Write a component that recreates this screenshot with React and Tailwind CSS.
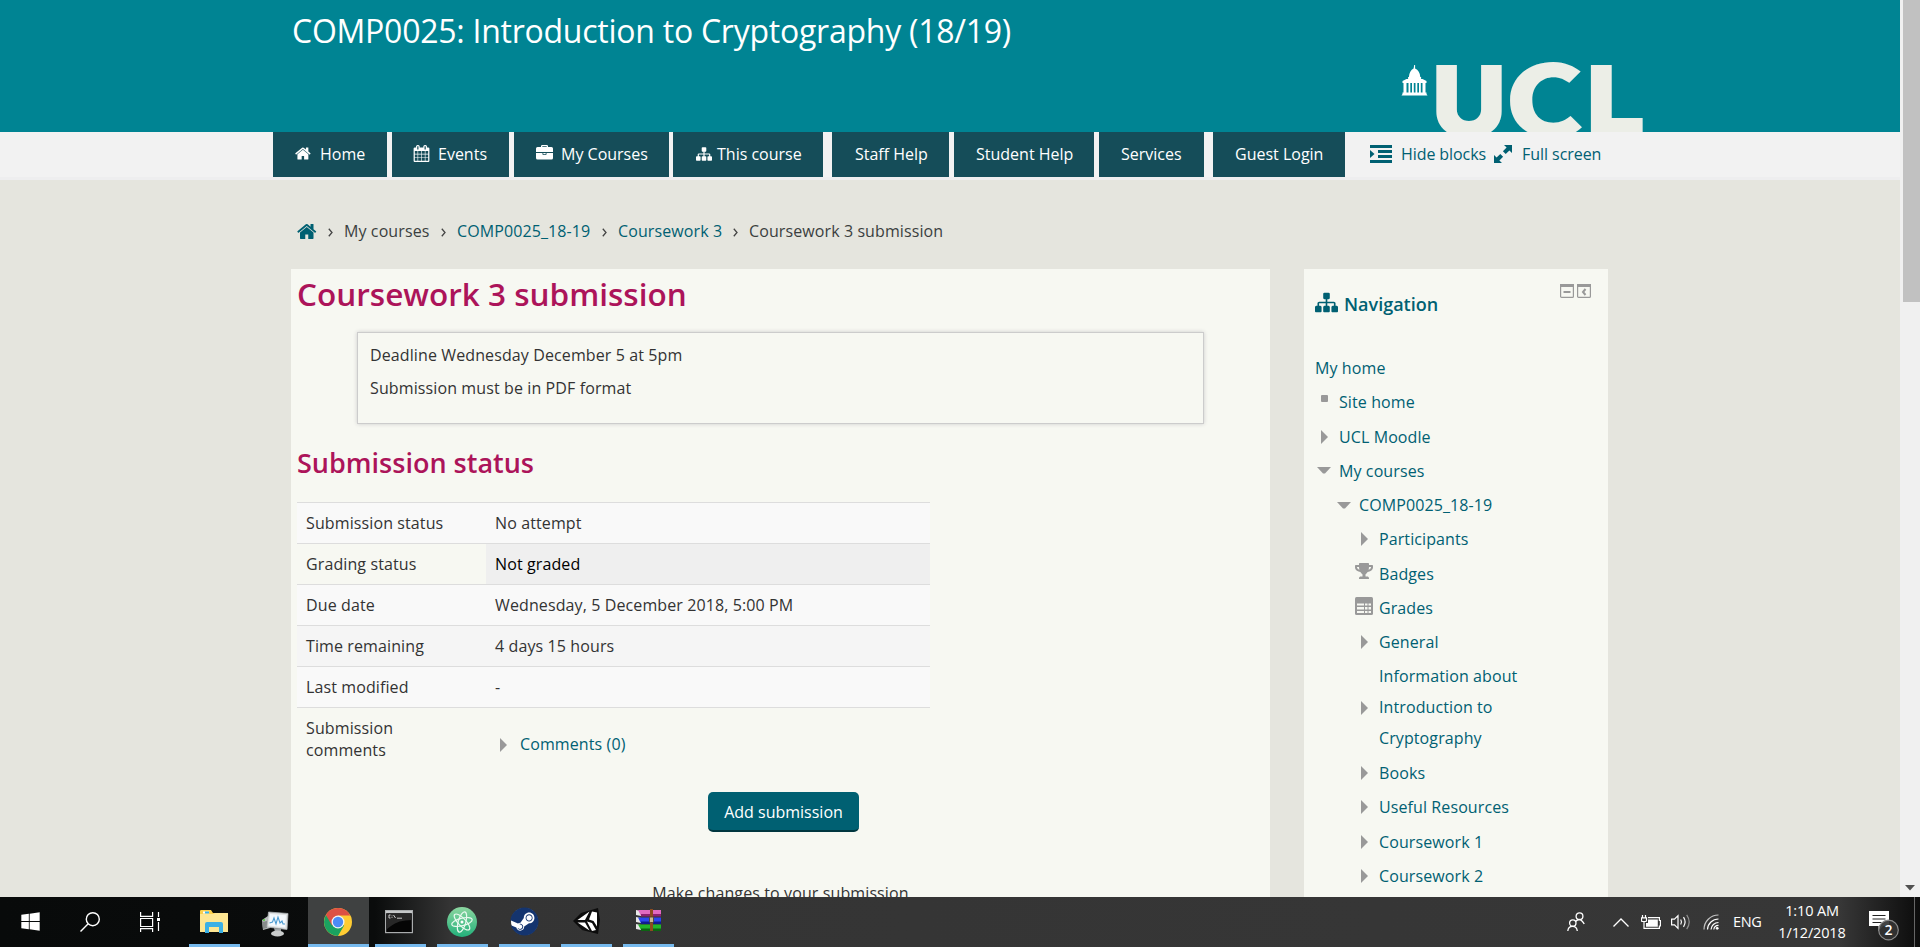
import React from "react";
import { FaSteam, FaTrophy, FaWindows } from "react-icons/fa";

const HOME =
  "M1408 992v480q0 26-19 45t-45 19h-384v-384h-256v384h-384q-26 0-45-19t-19-45v-480q0-1 .5-3t.5-3l575-474 575 474q1 2 1 6zm223-69l-62 74q-8 9-21 11h-3q-13 0-21-7l-692-577-692 577q-12 8-24 7-13-2-21-11l-62-74q-8-10-7-23.5t11-21.5l719-599q32-26 76-26t76 26l244 204v-195q0-14 9-23t23-9h192q14 0 23 9t9 23v408l219 182q10 8 11 21.5t-7 23.5z";
const CALENDAR =
  "M192 1664h288v-288h-288v288zm352 0h320v-288h-320v288zm-352-352h288v-320h-288v320zm352 0h320v-320h-320v320zm-352-384h288v-288h-288v288zm736 736h320v-288h-320v288zm-384-736h320v-288h-320v288zm768 736h288v-288h-288v288zm-384-352h320v-320h-320v320zm-352-864v-288q0-13-9.5-22.5t-22.5-9.5h-64q-13 0-22.5 9.5t-9.5 22.5v288q0 13 9.5 22.5t22.5 9.5h64q13 0 22.5-9.5t9.5-22.5zm736 864h288v-320h-288v320zm-384-384h320v-288h-320v288zm384 0h288v-288h-288v288zm32-480v-288q0-13-9.5-22.5t-22.5-9.5h-64q-13 0-22.5 9.5t-9.5 22.5v288q0 13 9.5 22.5t22.5 9.5h64q13 0 22.5-9.5t9.5-22.5zm384-64v1280q0 52-38 90t-90 38h-1408q-52 0-90-38t-38-90v-1280q0-52 38-90t90-38h128v-96q0-66 47-113t113-47h64q66 0 113 47t47 113v96h384v-96q0-66 47-113t113-47h64q66 0 113 47t47 113v96h128q52 0 90 38t38 90z";
const SITEMAP =
  "M1792 1248v320q0 40-28 68t-68 28h-320q-40 0-68-28t-28-68v-320q0-40 28-68t68-28h96v-192h-512v192h96q40 0 68 28t28 68v320q0 40-28 68t-68 28h-320q-40 0-68-28t-28-68v-320q0-40 28-68t68-28h96v-192h-512v192h96q40 0 68 28t28 68v320q0 40-28 68t-68 28h-320q-40 0-68-28t-28-68v-320q0-40 28-68t68-28h96v-192q0-52 38-90t90-38h512v-192h-96q-40 0-68-28t-28-68v-320q0-40 28-68t68-28h320q40 0 68 28t28 68v320q0 40-28 68t-68 28h-96v192h512q52 0 90 38t38 90v192h96q40 0 68 28t28 68z";

function Glyph({ d, className }) {
  return (
    <svg viewBox="0 0 1792 1792" fill="currentColor" className={className}>
      <path d={d} />
    </svg>
  );
}

function Briefcase() {
  return (
    <svg viewBox="0 0 17 15" className="h-[15px] w-[17px]" fill="currentColor">
      <path d="M5 2V1.2Q5 0 6.200 0h4.600Q12 0 12 1.200V2h3.500Q17 2 17 3.500V7H0V3.500Q0 2 1.500 2zM6.300 2h4.400V1.200H6.300z" />
      <path d="M0 8h6.500v1.200q0 .8.8.8h2.400q.8 0 .8-.8V8H17v5q0 1.500-1.500 1.500h-14Q0 14.500 0 13zM7.300 8h2.400v1.200H7.300z" />
    </svg>
  );
}

const tabs = [
  { label: "Home", box: "w-[114px] pl-[22px]", icon: <Glyph d={HOME} className="mr-[8px] size-[17px]" /> },
  { label: "Events", box: "ml-[5px] w-[117px] pl-[21px]", icon: <Glyph d={CALENDAR} className="mr-[8px] size-[17px]" /> },
  { label: "My Courses", box: "ml-[5px] w-[155px] pl-[22px]", icon: <span className="mr-[8px] pb-[2px]"><Briefcase /></span> },
  { label: "This course", box: "ml-[4px] w-[150px] pl-[23px]", icon: <Glyph d={SITEMAP} className="mr-[5px] size-[16px]" /> },
  { label: "Staff Help", box: "ml-[9px] w-[117px] pl-[23px]" },
  { label: "Student Help", box: "ml-[5px] w-[140px] pl-[22px]" },
  { label: "Services", box: "ml-[5px] w-[105px] pl-[22px]" },
  { label: "Guest Login", box: "ml-[9px] w-[132px] pl-[22px]" },
];

function UclLogo() {
  return (
    <svg viewBox="0 0 252 72" className="mr-[253px] h-[72px] w-[252px] shrink-0 overflow-hidden">
      <g fill="#fff">
        <path d="M19.200 5h.9v3.500q4.700 2 5.200 8.500h.8v2.500h-13V17h.8q.5-6.500 4.700-8.500z" />
        <path d="M7.500 21l4-2h16l4 2v2h-24zM8.500 22.500h3v10h-3zM13.500 22.500h1.800v10h-1.800zM17 22.500h1.800v10H17zM20.500 22.500h1.800v10h-1.800zM24 22.500h1.800v10H24zM27.500 22.500h3v10h-3zM7.500 32.500h24V34l1 1.500h-26l1-1.500z" />
      </g>
      <g fill="#eceee7" className="font-black">
        <text x="36.400" y="76.700" textLength="75" lengthAdjust="spacingAndGlyphs" className="font-['Inter',sans-serif] text-[99px]">U</text>
        <text x="108.700" y="76.900" textLength="81" lengthAdjust="spacingAndGlyphs" className="font-['Noto_Sans_CJK_SC',sans-serif] text-[99px]">C</text>
        <text x="191" y="73" textLength="59.500" lengthAdjust="spacingAndGlyphs" className="font-['Inter',sans-serif] text-[94px]">L</text>
      </g>
    </svg>
  );
}

function Header() {
  return (
    <header className="flex h-[132px] justify-between bg-[#008493] pl-[292px]">
      <h1 className="pt-[11px] text-[32px] leading-10 tracking-[-0.250px] text-white">COMP0025: Introduction to Cryptography (18/19)</h1>
      <div className="flex items-end">
        <UclLogo />
      </div>
    </header>
  );
}

function NavBar() {
  return (
    <nav className="flex h-12 border-b-[3px] border-[#eeeeef] bg-[#f2f2f2] pl-[273px] text-base whitespace-nowrap">
      {tabs.map((t) => (
        <a key={t.label} className={"flex h-[45px] shrink-0 items-center bg-[#154d59] pb-[2px] text-white " + t.box}>
          {t.icon}
          {t.label}
        </a>
      ))}
      <a className="ml-[25px] flex h-[45px] items-center pb-[2px] text-[#006072]">
        <svg viewBox="0 0 22 18" className="mr-[9px] h-[18px] w-[22px]" fill="currentColor">
          <path d="M0 0h22v3H0zM8 5h14v3H8zM8 10h14v3H8zM0 15h22v3H0zM0 5l4.500 4L0 13z" />
        </svg>
        <span className="w-[84px] tracking-[-0.080px]">Hide blocks</span>
        <svg viewBox="0 0 20 20" className="mr-[9px] ml-[8px] size-5" fill="currentColor">
          <path d="M11 1h8v8l-2.600-2.600-3.700 3.700-2.800-2.800 3.700-3.700zM1 11l2.600 2.600 3.700-3.700 2.800 2.800-3.700 3.700L9 19H1z" />
          <path d="M8.500 9l2.500 2.500" stroke="#f2f2f2" strokeWidth="2" />
        </svg>
        <span className="tracking-[-0.050px]">Full screen</span>
      </a>
    </nav>
  );
}

function Chevron() {
  return (
    <svg viewBox="0 0 5 10" className="mx-[11px] mt-[2px] h-[9px] w-[5px] shrink-0" fill="none" stroke="#444" strokeWidth="1.400">
      <path d="M.6 .8L4.200 5 .6 9.200" />
    </svg>
  );
}

function Breadcrumb() {
  return (
    <div className="mt-[40px] flex h-[22px] items-center pl-[297px] text-base tracking-[0.100px] whitespace-nowrap text-[#3b3f3f]">
      <Glyph d={HOME} className="-mr-[1px] size-[21px] text-[#006072]" />
      <Chevron />
      <span className="w-[86px]">My courses</span>
      <Chevron />
      <span className="w-[134px] text-[#006072]">COMP0025_18-19</span>
      <Chevron />
      <span className="w-[104px] text-[#006072]">Coursework 3</span>
      <Chevron />
      <span>Coursework 3 submission</span>
    </div>
  );
}

function Right({ className }) {
  return (
    <svg viewBox="0 0 7 14" className={"h-[14px] w-[7px] " + (className || "")} fill="#999">
      <path d="M0 0l7 7-7 7z" />
    </svg>
  );
}

function Down() {
  return (
    <svg viewBox="0 0 14 7" className="h-[7px] w-[14px]" fill="#999">
      <path d="M0 0h14L8 6.500H6z" />
    </svg>
  );
}

const rows = [
  { k: "Submission status", v: "No attempt", row: "bg-[#f9f9f9]", cell: "" },
  { k: "Grading status", v: "Not graded", row: "", cell: "bg-[#efefef] text-black" },
  { k: "Due date", v: "Wednesday, 5 December 2018, 5:00 PM", row: "bg-[#f9f9f9]", cell: "" },
  { k: "Time remaining", v: "4 days 15 hours", row: "bg-[#f5f5f5]", cell: "" },
  { k: "Last modified", v: "-", row: "bg-[#f9f9f9]", cell: "" },
];

function Main() {
  return (
    <main className="h-[628px] w-[979px] shrink-0 overflow-hidden bg-[#f7f8f2] pt-[5px] pl-[6px] tracking-[0.110px] text-[#333]">
      <h2 className="text-[31.500px] leading-10 font-semibold tracking-normal text-[#ac145a]">Coursework 3 submission</h2>
      <div className="mt-[18px] ml-[60px] h-[92px] w-[847px] border border-[#ccc] px-[12px] pt-[11px] leading-[22px] shadow-[0_0_4px_#ccc]">
        <p>Deadline Wednesday December 5 at 5pm</p>
        <p className="mt-[11px]">Submission must be in PDF format</p>
      </div>
      <h3 className="mt-[19px] text-[27px] leading-10 font-semibold tracking-normal text-[#ac145a]">Submission status</h3>
      <div className="mt-[19px] w-[633px]">
        {rows.map((r) => (
          <div key={r.k} className={"flex h-[41px] border-t border-[#ddd] leading-10 " + r.row}>
            <div className="w-[189px] pl-[9px]">{r.k}</div>
            <div className={"flex-1 pl-[9px] " + r.cell}>{r.v}</div>
          </div>
        ))}
        <div className="flex border-t border-[#ddd]">
          <div className="w-[189px] pt-[9px] pl-[9px] leading-[22px]">
            Submission
            <br />
            comments
          </div>
          <div className="flex h-[52px] items-center pt-[20px] pl-[14px] text-[#006072]">
            <Right className="mt-[2px] mr-[13px]" />
            <span>Comments (0)</span>
          </div>
        </div>
      </div>
      <div className="mt-[31px] flex w-[967px] flex-col items-center pl-[6px]">
        <button className="h-[40px] w-[151px] rounded-[5px] border-b-2 border-[#00363f] bg-[#006072] pt-[1px] text-base tracking-normal text-white">Add submission</button>
        <p className="mt-[50px] mr-[6px] leading-[22px]">Make changes to your submission</p>
      </div>
    </main>
  );
}

const tree = [
  { t: "Site home", pad: "pl-[3px]", icon: <span className="mb-[8px] size-[7px] rounded-[1px] bg-[#999]" /> },
  { t: "UCL Moodle", pad: "pl-[3px]", icon: <Right /> },
  { t: "My courses", pad: "pl-[3px]", icon: <Down /> },
  { t: "COMP0025_18-19", pad: "pl-[23px]", icon: <Down /> },
  { t: "Participants", pad: "pl-[43px]", icon: <Right /> },
  { t: "Badges", pad: "pl-[43px]", icon: <FaTrophy className="mb-[5px] h-[18px] w-[18px] shrink-0 text-[#999]" /> },
  { t: "Grades", pad: "pl-[43px]", icon: <GradesIcon /> },
  { t: "General", pad: "pl-[43px]", icon: <Right /> },
  { t: "Information about Introduction to Cryptography", pad: "pl-[43px]", icon: <Right />, tall: true },
  { t: "Books", pad: "pl-[43px]", icon: <Right /> },
  { t: "Useful Resources", pad: "pl-[43px]", icon: <Right /> },
  { t: "Coursework 1", pad: "pl-[43px]", icon: <Right /> },
  { t: "Coursework 2", pad: "pl-[43px]", icon: <Right /> },
];

function GradesIcon() {
  return (
    <svg viewBox="0 0 18 18" className="mb-[3px] size-[18px] shrink-0">
      <rect width="18" height="18" rx="1.500" fill="#999" />
      <path fill="#f7f8f2" d="M2 6.500h7v2H2zM10 6.500h2.500v2H10zM13.500 6.500H16v2h-2.500zM2 10h7v2.500H2zM10 10h2.500v2.500H10zM13.500 10H16v2.500h-2.500zM2 14h7v2H2zM10 14h2.500v2H10zM13.500 14H16v2h-2.500z" />
    </svg>
  );
}

function DockIcon({ d }) {
  return (
    <svg viewBox="0 0 14 14" className="size-[14px]">
      <rect x=".6" y=".6" width="12.800" height="12.800" rx="1" fill="#f7f8f2" stroke="#999" strokeWidth="1.200" />
      <path d="M0 0h14v3H0z" fill="#999" />
      <path d={d} fill="none" stroke="#999" strokeWidth="2" />
    </svg>
  );
}

function Sidebar() {
  return (
    <aside className="ml-[34px] h-[628px] w-[304px] shrink-0 overflow-hidden bg-[#f7f8f2] tracking-[0.100px] text-[#006072]">
      <div className="flex pl-[11px]">
        <Glyph d={SITEMAP} className="mt-[22px] size-[23px]" />
        <span className="mt-[23px] ml-[6px] w-[216px] text-[18px] leading-6 font-semibold tracking-normal">Navigation</span>
        <div className="mt-[15px] flex gap-[3px]">
          <DockIcon d="M3.500 8h7" />
          <DockIcon d="M8.500 5L6 8l2.500 3" />
        </div>
      </div>
      <div className="mt-[35px] pl-[11px]">
        <div className="h-[34.250px] leading-[34px]">My home</div>
        {tree.map((n) => (
          <div key={n.t} className={"flex items-center " + n.pad + (n.tall ? " h-[96.600px]" : " h-[34.270px]")}>
            <span className="-ml-[3px] mr-[6px] flex w-[18px] shrink-0 justify-center">{n.icon}</span>
            <span className={n.tall ? "w-[150px] leading-[31px]" : ""}>{n.t}</span>
          </div>
        ))}
      </div>
    </aside>
  );
}

function ScrollBar() {
  return (
    <div className="flex h-[897px] w-[20px] flex-col items-center justify-between bg-[#f0f0f0]">
      <div className="ml-[3px] h-[302px] w-[17px] bg-[#c1c1c1]" />
      <svg viewBox="0 0 10 6" className="mb-[6px] h-[6px] w-[10px]" fill="#505050">
        <path d="M0 0h10L5 5.500z" />
      </svg>
    </div>
  );
}

function Task({ children, className, bar = true }) {
  return (
    <div className={"flex h-[50px] shrink-0 flex-col items-center " + (className || "")}>
      <div className="flex h-[47px] items-center justify-center">{children}</div>
      {bar && <div className="h-[3px] w-full bg-[#76b9ed]" />}
    </div>
  );
}

function Explorer() {
  return (
    <svg viewBox="0 0 28 24" className="h-[24px] w-[28px]">
      <path d="M0 1q0-1 1-1h10l2 3h14q1 0 1 1v18H0z" fill="#fcd04b" />
      <path d="M3 1.500h6v2H3z" fill="#fff" />
      <path d="M5 1.500h4v2H5z" fill="#3bb2e8" />
      <path d="M0 4h13l2-1h13v19H0z" fill="#fee692" />
      <path d="M5 23v-9q0-2 2-2h14q2 0 2 2v9h-4v-6H9v6z" fill="#3cb0e5" />
    </svg>
  );
}

function MonitorIcon() {
  return (
    <svg viewBox="0 0 28 26" className="h-[26px] w-[28px]">
      <path d="M1 9l6-4 2 12-7 2z" fill="#b9bdbd" />
      <path d="M1 11l5-1v7l-4 1z" fill="#868b8b" />
      <circle cx="3" cy="9" r="1" fill="#4ecb3a" />
      <path d="M7.500 1L27 2.500 26 18.500 6 16z" fill="#dfe2e3" stroke="#aaafb1" strokeWidth=".8" />
      <path d="M9 3l16 1.300-.8 12.200L8 14.500z" fill="#f4f9fd" />
      <path d="M8.500 12l3-1 1.500-4 2 6 2-7 2 6 2-2 1 3h2" fill="none" stroke="#4b9bd2" strokeWidth="1.100" />
      <path d="M13 17l7 1v3h-6z" fill="#9da2a4" />
      <ellipse cx="16.500" cy="22.500" rx="6.500" ry="3" fill="#c9cccc" />
    </svg>
  );
}

function ChromeIcon() {
  return (
    <svg viewBox="0 0 28 28" className="size-[28px]">
      <circle cx="14" cy="14" r="14" fill="#fc3" />
      <path d="M14 14L1.900 7A14 14 0 0 0 14 28l6.100-10.500z" fill="#1aa260" />
      <path d="M14 14V7.500h12.300A14 14 0 0 0 1.900 7L8 17.500z" fill="#dd5144" />
      <circle cx="14" cy="14" r="6.500" fill="#f4f4f4" />
      <circle cx="14" cy="14" r="5.200" fill="#4c8bf5" />
    </svg>
  );
}

function CmdIcon() {
  return (
    <svg viewBox="0 0 28 24" className="h-[24px] w-[28px]">
      <rect x=".6" y=".6" width="26.800" height="22" fill="#050505" stroke="#a9acad" strokeWidth="1.200" />
      <path d="M1 1h26v2.200H1z" fill="#c5c8c9" />
      <path d="M27 4v6Q13 10 6 16l-4 3V4z" fill="#272727" />
      <path d="M5.500 5H4v3h1.500M7 5.500v.8M7 7v.8M8.500 5l2 3M12 8.200h5" stroke="#ddd" strokeWidth=".9" fill="none" />
    </svg>
  );
}

function AtomIcon() {
  return (
    <svg viewBox="0 0 30 30" className="size-[30px]">
      <defs>
        <linearGradient id="atom" x1="0" y1="0" x2="0" y2="1">
          <stop offset="0" stopColor="#8cd6a0" />
          <stop offset="1" stopColor="#22b07a" />
        </linearGradient>
      </defs>
      <circle cx="15" cy="15" r="15" fill="url(#atom)" />
      <g fill="none" stroke="#e8f8ee" strokeWidth="1.200">
        <ellipse cx="15" cy="15" rx="10.500" ry="3.800" transform="rotate(-14 15 15)" />
        <ellipse cx="15" cy="15" rx="10.500" ry="3.800" transform="rotate(46 15 15)" />
        <ellipse cx="15" cy="15" rx="10.500" ry="3.800" transform="rotate(106 15 15)" />
      </g>
      <circle cx="15" cy="15" r="1.500" fill="#fff" />
    </svg>
  );
}

function SteamIcon() {
  return (
    <span className="flex size-[27px] items-center justify-center rounded-full bg-white">
      <FaSteam className="size-[29px] shrink-0 text-[#14346e]" />
    </span>
  );
}

function UnityIcon() {
  return (
    <svg viewBox="0 0 28 28" className="size-[28px]">
      <path d="M0 14L8 6l17-5 2 12-2 14-16-4z" fill="#0c0c0c" />
      <path d="M4.500 13l12-8.500-4.500 8.500zM4.500 15.500H12l4.500 8zM19 4.500l5 1v14l-3.500-5.500-4.500-1.500zM14 14.500l5 1.500 4 7-4 1z" fill="#fff" />
    </svg>
  );
}

function WinrarIcon() {
  return (
    <svg viewBox="0 0 28 23" className="h-[23px] w-[28px]">
      <path d="M1 1l5 1v5l-5-1zM1 8l5 1v5l-5-1zM1 15l5 1v5l-5-1z" fill="#e8e8e8" />
      <path d="M3 1h23v6H6z" fill="#e06ac0" />
      <path d="M6 5h20v2.500H6z" fill="#8c2070" />
      <path d="M3 8.500h23v6H6z" fill="#2b46ef" />
      <path d="M6 12.500h20V15H6z" fill="#101c90" />
      <path d="M3 15.500h23v5.500H6z" fill="#22b52a" />
      <path d="M6 19.500h20V22H6z" fill="#0c6412" />
      <path d="M15 0h3v22h-3z" fill="#8d4a1f" />
      <rect x="14.500" y="8" width="4" height="5.500" rx="1" fill="#c9b894" stroke="#4a3a20" strokeWidth=".8" />
    </svg>
  );
}

function TaskBar() {
  return (
    <footer className="flex h-[50px] w-[1920px] bg-[linear-gradient(90deg,#080a0a_0px,#0a0c0c_375px,#343434_450px,#373737_1840px,#101010_1912px,#0c0c0c_1920px)] pl-[20px] text-white">
      <Task bar={false} className="w-[20px] pt-[1px]">
        <FaWindows className="size-[21px]" />
      </Task>
      <Task bar={false} className="ml-[40px] w-[20px] pt-[1px]">
        <svg viewBox="0 0 20 20" className="size-5" fill="none" stroke="#fff" strokeWidth="1.400">
          <circle cx="12.800" cy="7.200" r="6.500" />
          <path d="M8.200 11.800L.5 19.500" />
        </svg>
      </Task>
      <Task bar={false} className="ml-[40px] w-[20px] pt-[1px]">
        <svg viewBox="0 0 20 20" className="size-5" fill="none" stroke="#fff" strokeWidth="1.200">
          <path d="M.6 0v4.400h12V0M.6 6.500h12v8H.6zM.6 20v-3.400h12V20M18.500 0v5M18.500 10v9" />
          <path d="M17 6h3v3h-3z" fill="#fff" stroke="none" />
        </svg>
      </Task>
      <Task className="ml-[29px] w-[51px]"><span className="mt-[2px] -ml-[1px]"><Explorer /></span></Task>
      <Task bar={false} className="ml-[21px] w-[28px] pt-[3px]"><MonitorIcon /></Task>
      <Task className="ml-[19px] w-[61px] bg-[#3f4141]"><span className="mt-[2px] mr-[2px]"><ChromeIcon /></span></Task>
      <Task className="ml-[6px] w-[51px]"><span className="mt-[2px] -ml-[3px]"><CmdIcon /></span></Task>
      <Task className="ml-[11px] w-[51px]"><span className="mt-[2px] mr-[1px]"><AtomIcon /></span></Task>
      <Task className="ml-[11px] w-[51px]"><span className="mt-[2px]"><SteamIcon /></span></Task>
      <Task className="ml-[11px] w-[51px]"><span><UnityIcon /></span></Task>
      <Task className="ml-[11px] w-[51px]"><span className="-mt-[1px]"><WinrarIcon /></span></Task>

      <div className="ml-auto flex h-[50px] items-center text-[15px]">
        <svg viewBox="0 0 18 20" className="mb-[1px] h-[20px] w-[18px]" fill="none" stroke="#fff" strokeWidth="1.300">
          <circle cx="12.500" cy="4.200" r="3.400" />
          <path d="M8.500 9.500Q12 6 14.500 8.500T17.200 12" />
          <circle cx="5.800" cy="11" r="3.200" />
          <path d="M.8 19Q1.200 14.300 5.500 14.300T10.300 19" />
        </svg>
        <svg viewBox="0 0 16 9" className="ml-[28px] h-[9px] w-[16px]" fill="none" stroke="#fff" strokeWidth="1.300">
          <path d="M.5 8.500L8 1l7.500 7.500" />
        </svg>
        <svg viewBox="0 0 20 14" className="ml-[12px] h-[14px] w-[20px]" fill="none" stroke="#fff" strokeWidth="1.200">
          <path d="M1.500 0v3M4.500 0v3M.5 2.800h5v2.700q0 1-1 1h-3q-1 0-1-1zM3 6.500v6.900h15.400v-2.400h1V5.500h-1V2.600H7" />
          <path d="M7 4.500h9.800v7.200H5V8h2z" fill="#fff" stroke="none" />
        </svg>
        <svg viewBox="0 0 20 18" className="ml-[10px] h-[18px] w-[20px]" fill="none" stroke="#fff" strokeWidth="1.200">
          <path d="M.6 6.200h2.900L7 2.700v12.600L3.500 11.800H.6zM9.700 6.500q1.600 2.500 0 5M12.500 4.200q3.200 4.800 0 9.600" />
          <path d="M15.700 1.800q5 7.200 0 14.400" opacity=".45" />
        </svg>
        <svg viewBox="0 0 16 16" className="ml-[12px] size-4" fill="none" stroke="#fff" strokeWidth="1.200">
          <path d="M1 15.500A14.500 14.500 0 0 1 15.500 1" opacity=".7" />
          <path d="M4.500 15.500a11 11 0 0 1 11-10.500M8 15.500A7.500 7.500 0 0 1 15.500 8.500M10.800 15.500a4.700 4.700 0 0 1 4.700-4.200" />
          <circle cx="14.200" cy="14.300" r="1.400" fill="#fff" stroke="none" />
        </svg>
        <span className="ml-[14px] w-[28px] text-[14.500px] tracking-[-0.300px]">ENG</span>
        <div className="ml-[17px] w-[68px] text-center text-[14.500px] leading-[22.500px] tracking-[-0.150px] whitespace-nowrap">
          <div>1:10 AM</div>
          <div>1/12/2018</div>
        </div>
        <svg viewBox="0 0 32 32" className="mt-[10px] ml-[23px] size-8" fill="none">
          <path d="M0 0h20v15h-6l-4.500 5v-5H0z" fill="#fff" />
          <path d="M3.500 4.500h13M3.500 8h13M3.500 11.500h9" stroke="#222" strokeWidth="1.200" />
          <circle cx="19.500" cy="19" r="9.800" fill="#333" fillOpacity=".92" stroke="#8a8a8a" strokeWidth="1.200" />
          <text x="19.500" y="24" textAnchor="middle" fill="#fff" className="font-['Open_Sans',sans-serif] text-[14px] font-semibold">2</text>
        </svg>
        <span className="ml-[13px] h-[50px] w-px bg-[#666]" />
        <span className="w-[5px]" />
      </div>
    </footer>
  );
}

export default function App() {
  return (
    <div className="flex h-[947px] w-[1920px] flex-col overflow-hidden bg-[#e5e5de] font-['Open_Sans',sans-serif] text-base">
      <div className="flex h-[897px] overflow-hidden">
        <div className="h-[897px] w-[1900px] shrink-0 overflow-hidden">
          <Header />
          <NavBar />
          <Breadcrumb />
          <div className="mt-[27px] flex pl-[291px]">
            <Main />
            <Sidebar />
          </div>
        </div>
        <ScrollBar />
      </div>
      <TaskBar />
    </div>
  );
}
